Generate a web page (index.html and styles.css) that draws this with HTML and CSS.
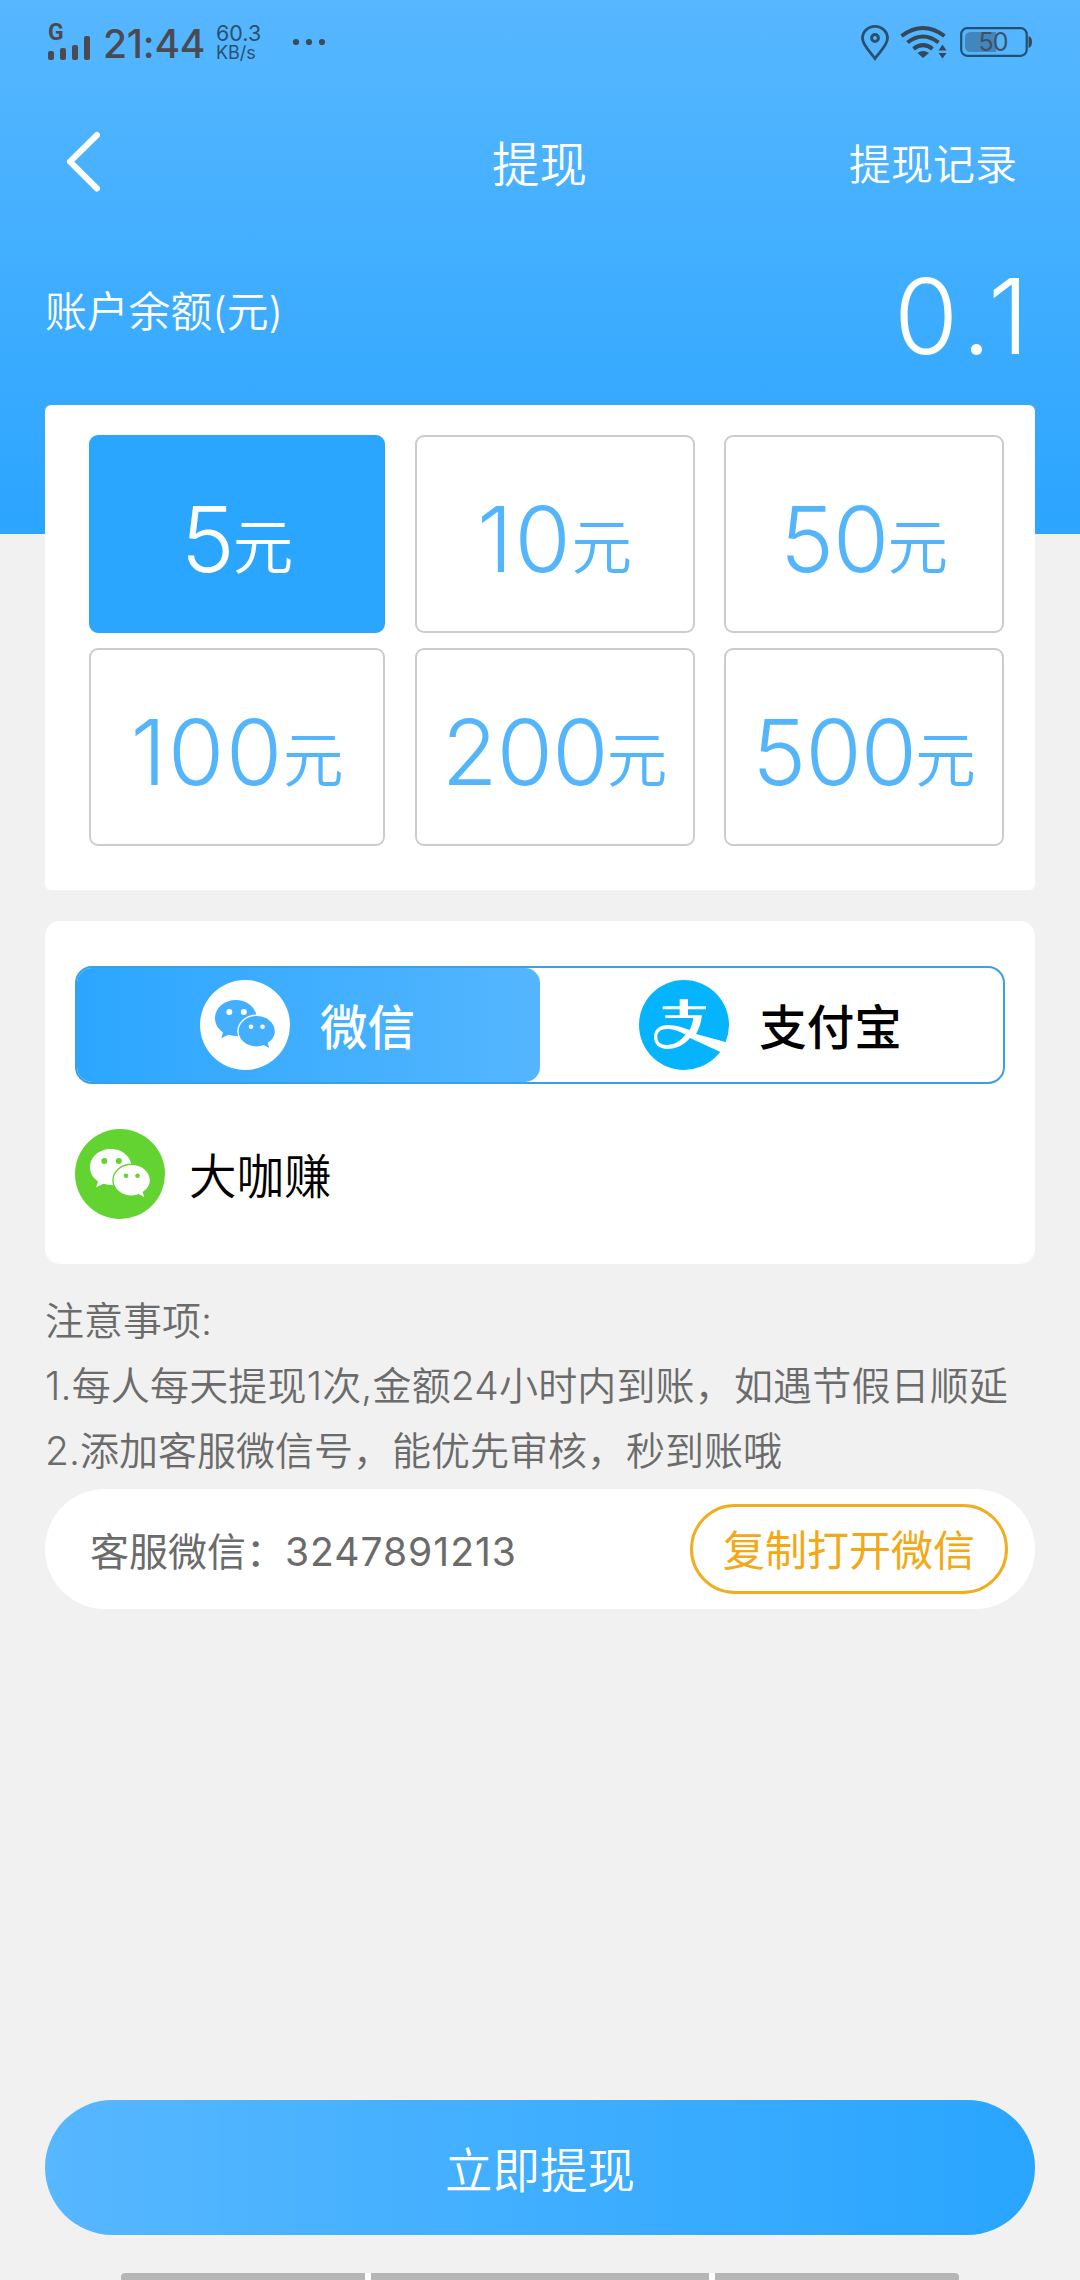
FILE: index.html
```html
<!DOCTYPE html>
<html lang="zh-CN">
<head>
<meta charset="utf-8">
<title>提现</title>
<link rel="stylesheet" href="styles.css">
</head>
<body>
<svg class="defs" width="0" height="0" aria-hidden="true">
  <symbol id="wechat" viewBox="0 0 90 90">
    <mask id="holes">
      <rect width="90" height="90" fill="#fff"/>
      <circle cx="29.3" cy="32" r="3" fill="#000"/>
      <circle cx="43.8" cy="32" r="3" fill="#000"/>
      <ellipse cx="56.7" cy="51.3" rx="19.4" ry="16.8" fill="#000"/>
    </mask>
    <mask id="eyes">
      <rect width="90" height="90" fill="#fff"/>
      <circle cx="51" cy="46.8" r="2.3" fill="#000"/>
      <circle cx="62.5" cy="46.8" r="2.3" fill="#000"/>
    </mask>
    <path mask="url(#holes)" fill="currentColor" d="M36 20C24 20 15 28 15 38.3C15 44 18 49 23 52.4L21.2 58.3L28.4 54.8C33 56.2 38 56.7 42 55.8L57 40C57 28.5 48 20 36 20Z"/>
    <path mask="url(#eyes)" fill="currentColor" d="M56.7 36C46.6 36 38.6 42.8 38.6 51.3C38.6 59.8 46.6 66.5 56.7 66.5C59.2 66.5 61.5 66 63.7 65.1L69.2 68L67.7 62.9C72.2 60 74.8 56 74.8 51.3C74.8 42.8 66.8 36 56.7 36Z"/>
  </symbol>
</svg>
<div class="page">
  <div class="top">
    <div class="status">
      <div class="signal">
        <span class="net">G</span>
        <svg width="42" height="24" viewBox="0 0 42 24" fill="#4a4a50"><rect y="15" width="6" height="9" rx="2"/><rect x="12" y="12" width="6" height="12" rx="2"/><rect x="24" y="9" width="6" height="15" rx="2"/><rect x="36" width="6" height="24" rx="2"/></svg>
      </div>
      <span class="clock">21:44</span>
      <div class="speed"><span class="rate">60.3</span><span class="unit">KB/s</span></div>
      <svg class="dots" width="34" height="8" viewBox="0 0 34 8" fill="#3a4c5c"><circle cx="4" cy="4" r="3.1"/><circle cx="17" cy="4" r="3.1"/><circle cx="30" cy="4" r="3.1"/></svg>
      <svg class="sys" width="174" height="38" viewBox="860 24 174 38">
        <g fill="none" stroke="#2c4f6b" stroke-width="2.8">
          <path d="M875 58.5C870 51.5 862.5 45 862.5 38.3A12.5 12 0 0 1 887.5 38.3C887.5 45 880 51.5 875 58.5Z"/>
          <circle cx="875" cy="38" r="3.4" stroke-width="3"/>
        </g>
        <g fill="none" stroke="#34485a" stroke-width="4">
          <path d="M901.5 36Q923 20 944.5 36"/><path d="M907.5 42.5Q923 30.5 938.5 42.5"/><path d="M913.5 48.8Q923 41.5 932.5 48.8"/>
        </g>
        <path d="M917.5 53Q923 49 929 53L923 58Z" fill="#34485a"/>
        <path d="M938.5 50.5L942.5 44.5L946.5 50.5ZM938.5 53L942.5 58.5L946.5 53Z" fill="#34485a"/>
        <path d="M971 32H996V52H971Q965 52 965 46V38Q965 32 971 32Z" fill="#4386bb"/>
        <rect x="961.2" y="28.2" width="65.5" height="27.6" rx="6" fill="none" stroke="#21506f" stroke-width="2.2"/>
        <path d="M1028.5 36Q1032 37 1032 42T1028.5 48Z" fill="#34485a"/>
        <text x="993" y="51" text-anchor="middle" class="level">50</text>
      </svg>
    </div>
    <div class="nav">
      <svg class="back" width="35" height="62" viewBox="0 0 35 62" fill="none" stroke="#fff" stroke-width="6" stroke-linecap="round" stroke-linejoin="round"><path d="M32 4L5 30.7L32 57.5"/></svg>
      <h1 class="title">提现</h1>
      <a class="record">提现记录</a>
    </div>
    <div class="balance"><span class="label">账户余额(元)</span><span class="sum">0.1</span></div>
  </div>

  <div class="card amounts">
    <div class="amount on"><b>5</b><i>元</i></div>
    <div class="amount wide"><b>10</b><i>元</i></div>
    <div class="amount"><b>50</b><i>元</i></div>
    <div class="amount wide"><b>100</b><i>元</i></div>
    <div class="amount"><b>200</b><i>元</i></div>
    <div class="amount"><b>500</b><i>元</i></div>
  </div>

  <div class="card pay">
    <div class="tabs">
      <div class="tab on">
        <svg class="icon" viewBox="0 0 90 90"><circle cx="45" cy="45" r="45" fill="#fff"/><use href="#wechat" color="#45afff"/></svg>
        <span>微信</span>
      </div>
      <div class="tab">
        <svg class="icon" viewBox="0 0 90 90"><circle cx="45" cy="45" r="45" fill="#06b4fd"/><path fill="#fff" fill-rule="evenodd" d="M40.7 19.3H49V26.3H67V29.3H49V35.3H63C62 43 60 49 57 54L87.5 62.3L90 66L81.5 72L51 58C45 65 37 69 28.5 69C20 69 15 64 15 57C15 49 21 45 29 45C37 45 44 47.5 50.5 50C52.5 46.5 53.8 42 54.3 38H26.3V35.3H40.7V29.3H23.7V26.3H40.7ZM46.5 54.5C40 51 34 49 28 49C21 49 18.3 52.5 18.3 57C18.3 62 22 65 27.5 65C35 65 41.5 61 46.5 54.5Z"/></svg>
        <span>支付宝</span>
      </div>
    </div>
    <div class="account">
      <svg class="icon" viewBox="0 0 90 90"><circle cx="45" cy="45" r="45" fill="#63d331"/><use href="#wechat" color="#fff"/></svg>
      <span>大咖赚</span>
    </div>
  </div>

  <div class="notes">
    <p>注意事项:</p>
    <p class="rule">1.每人每天提现1次,金额24小时内到账，如遇节假日顺延</p>
    <p>2.添加客服微信号，能优先审核，秒到账哦</p>
  </div>

  <div class="service">
    <span class="wx">客服微信：<span class="num">3247891213</span></span>
    <button class="copy">复制打开微信</button>
  </div>

  <button class="submit">立即提现</button>
  <div class="gesture"><span></span><span></span><span></span></div>
</div>
</body>
</html>
```
FILE: styles.css
```css
* { box-sizing: border-box; }
body {
  margin: 0;
  background: #f1f1f1;
  font-family: Inter, "Noto Sans CJK SC", sans-serif;
}
h1, p { margin: 0; font-weight: 400; }
b, i { font-style: normal; font-weight: inherit; }
button { font-family: inherit; padding: 0; border: 0; }
svg { display: block; flex: none; }
.defs { position: absolute; }
.page {
  width: 1080px;
  height: 2280px;
  display: flex;
  flex-direction: column;
  overflow: hidden;
}

/* header */
.top {
  height: 534px;
  flex: none;
  background: linear-gradient(#57b7ff, #2ba5ff);
  color: #fff;
}
.status { height: 84px; display: flex; align-items: center; padding: 0 46px 0 48px; color: #4a4a50; }
.signal { width: 55px; height: 36px; display: flex; flex-direction: column; justify-content: space-between; }
.signal svg { margin-top: -7px; }
.net { font: 700 23px/18px Roboto, sans-serif; }
.clock { width: 113px; font-size: 39px; line-height: 84px; padding-top: 4px; letter-spacing: -0.2px; white-space: nowrap; font-weight: 450; }
.speed { width: 76px; display: flex; flex-direction: column; color: #2c4f6b; white-space: nowrap; padding-top: 2px; }
.rate { font-size: 21.5px; line-height: 20px; }
.unit { font-size: 18px; line-height: 20px; }
.sys { margin-left: auto; margin-top: 2px; }
.level { font: 400 25px Inter, sans-serif; fill: #3d5265; letter-spacing: -1px; }
.nav { height: 156px; display: grid; grid-template-columns: 1fr auto 1fr; align-items: center; padding: 0 63px 0 65px; }
.title { font-size: 47.5px; line-height: 60px; padding-top: 5px; margin-left: -3px; font-weight: 350; }
.record { font-size: 42px; line-height: 60px; padding-top: 5px; justify-self: end; font-weight: 350; }
.balance { height: 150px; display: flex; justify-content: space-between; align-items: center; padding: 0 45px; }
.label { font-size: 41.8px; padding-bottom: 12px; font-weight: 350; }
.sum { font-size: 104px; line-height: 150px; font-weight: 320; padding-top: 2px; letter-spacing: 6px; }

/* amounts */
.card { background: #fff; margin: 0 45px; flex: none; }
.amounts {
  height: 485px;
  margin-top: -129px;
  border-radius: 6px;
  padding: 30px 30px 0 44px;
  display: grid;
  grid-template-columns: 296px 280px 280px;
  grid-template-rows: 198px 198px;
  gap: 15px 29.5px;
}
.amount {
  border: 2px solid #ccc;
  border-radius: 9px;
  display: flex;
  justify-content: center;
  align-items: baseline;
  color: #54b5fb;
  font-weight: 300;
}
.amount b { font-size: 91px; line-height: 204px; letter-spacing: -0.8px; }
.amount.wide b { letter-spacing: 1.8px; }
.amount i { font-size: 60.5px; line-height: 100px; font-weight: 350; margin-left: -1px; transform: translateY(-3px); }
.amount.on { background: #2ba6ff; border-color: #2ba6ff; color: #fff; }

/* payment */
.pay { height: 343px; margin-top: 31px; border-radius: 15px; padding: 45px 30px 0; }
.tabs { height: 118px; border: 2px solid #3b9fe3; border-radius: 17px; display: grid; grid-template-columns: 1fr 1fr; }
.tab { display: flex; align-items: center; justify-content: center; gap: 30px; padding-right: 2px; font-size: 47.5px; font-weight: 500; line-height: 60px; color: #000; border-radius: 15px; }
.tab.on { background: linear-gradient(90deg, #2ba6ff, #55b6ff); color: #fff; }
.tab span, .account span { padding-top: 5px; }
.icon { width: 90px; height: 90px; }
.account { display: flex; align-items: center; gap: 24px; margin-top: 45px; font-size: 47.5px; line-height: 60px; color: #000; font-weight: 350; }

/* notes */
.notes { margin: 24px 45px 0; height: 201px; color: #6b6b6b; font-size: 39px; white-space: nowrap; }
.notes p { line-height: 65px; font-weight: 350; }
.notes .rule { letter-spacing: 0.16px; }
.service { height: 120px; flex: none; margin: 0 45px; border-radius: 60px; background: #fff; display: flex; align-items: center; justify-content: space-between; padding: 0 27px 0 45px; color: #6b6b6b; font-size: 39px; }
.wx { white-space: nowrap; }
.num { letter-spacing: 1px; }
.copy { width: 318px; height: 90px; border: 3px solid #f0ad1f; border-radius: 45px; background: #fff; color: #f4a814; font-size: 42px; line-height: 60px; padding-top: 4px; font-weight: 400; }

/* footer */
.submit { height: 135px; flex: none; margin: auto 45px 38px; padding-top: 6px; border-radius: 68px; background: linear-gradient(90deg, #57b7ff, #29a5ff); color: #fff; font-size: 47.5px; line-height: 60px; font-weight: 350; }
.gesture { height: 7px; flex: none; margin: 0 121px; display: grid; grid-template-columns: 244fr 337fr 244fr; gap: 6px; background: #fff; border-radius: 4px 4px 0 0; overflow: hidden; }
.gesture span { background: #b6b6b6; }
```
